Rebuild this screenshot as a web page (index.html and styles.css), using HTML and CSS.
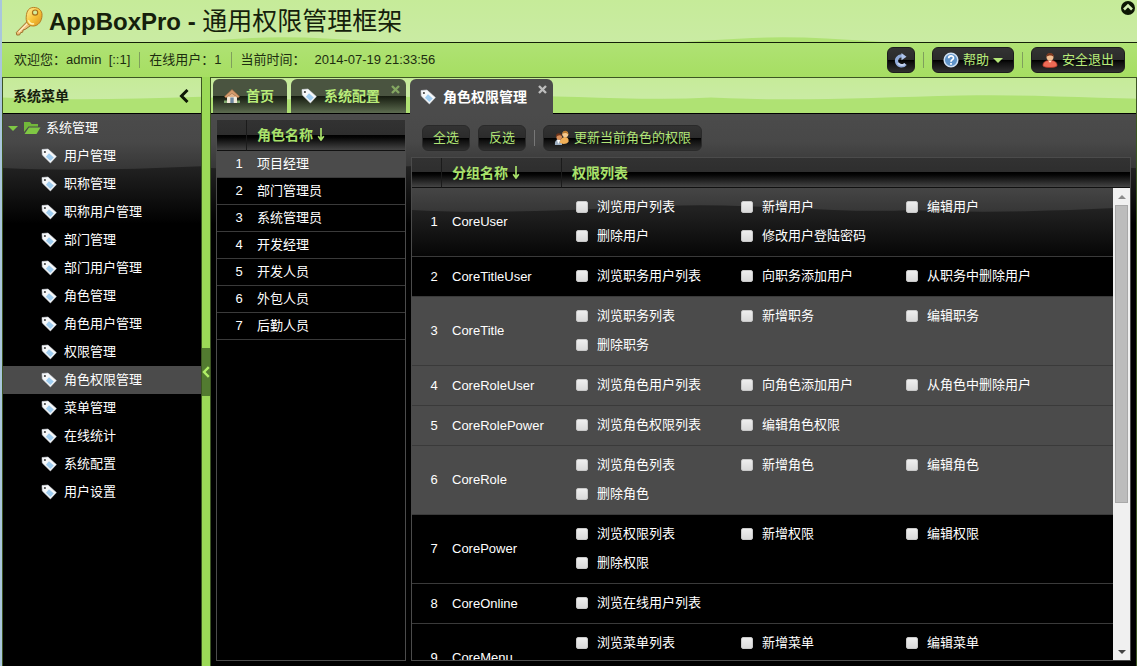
FILE: index.html
```
<!DOCTYPE html>
<html lang="zh-CN">
<head>
<meta charset="utf-8">
<title>AppBoxPro - 通用权限管理框架</title>
<link rel="stylesheet" href="styles.css">
</head>
<body>
<svg class="defs" aria-hidden="true">
  <defs>
    <linearGradient id="gold" x1="0" y1="0" x2="1" y2="1"><stop offset="0" stop-color="#fff0a0"/><stop offset=".5" stop-color="#f8c53a"/><stop offset="1" stop-color="#d98f1c"/></linearGradient>
    <symbol id="tag" viewBox="0 0 16 16"><path d="M1 1.500 7 1l8.400 7.600-6 6.400L1.300 7z" fill="#f6f8fa" stroke="#d3d9df" stroke-width=".6"/><path d="m8 5.200 4.800 4.200-3.400 3.600-4.500-4.200z" fill="#9fcdf0"/><circle cx="3.900" cy="4" r="1.100" fill="#444"/></symbol>
    <symbol id="house" viewBox="0 0 16 16"><path d="M0 12.500h16V15H0z" fill="#7fa86c"/><path d="M3 8h10v7H3z" fill="#f2ead9"/><path d="M0.500 8.500 8 1.500l7.500 7-1.500 1.300L8 5.500 2 9.800z" fill="#d49a6c" stroke="#a06a42" stroke-width=".6"/><path d="M6.300 9.500h3.400V15H6.300z" fill="#6f88a0"/><path d="M8 5.500 12.500 9h-9z" fill="#e5b48c"/></symbol>
    <symbol id="folder" viewBox="0 0 18 14"><path d="M1 1h6l1.500 2H15v2.500H5.500L1 11z" fill="#72b83a"/><path d="M6 6.500h11.500L13.500 13H1.500z" fill="#7fc744"/></symbol>
    <symbol id="key" viewBox="0 0 32 32"><path d="M14.500 16 2.500 28.200 3 31l3-.2 1-2.300 2.300-.6.300-2.300 2.200-.6L19 20z" fill="#f0c07a" stroke="#9a6a28"/><path d="M5 28 16 17" stroke="#fff0c8" stroke-width="1.300"/><path d="M17 2.500c5-2.500 12 0 12.800 5.500.7 5-1.800 12.500-8.300 13.300C16 22 12.500 18 13 12c.2-4 1-7.500 4-9.500z" fill="url(#gold)" stroke="#b4791f"/><circle cx="22.500" cy="7" r="2.800" fill="#d2ec9c" stroke="#a66e1a" stroke-width="1.200"/><path d="M15.500 15c.5 3 3 4.500 6 4" fill="none" stroke="#fff2b0" stroke-width="1.500"/></symbol>
    <symbol id="close" viewBox="0 0 9 9"><path d="m1 1 7 7M8 1 1 8" fill="none" stroke="currentColor" stroke-width="2.400"/></symbol>
    <symbol id="refresh" viewBox="0 0 16 16"><path d="M12.500 12A5 5 0 1 1 9 4" fill="none" stroke="#8fa9d8" stroke-width="3.200"/><path d="M12 12A4.800 4.800 0 0 1 5 11" fill="none" stroke="#c4d2ee" stroke-width="2"/><path d="m8.500 1 5 3.800-5 3.400z" fill="#b0c5ec"/></symbol>
    <symbol id="help" viewBox="0 0 16 16"><circle cx="8" cy="8" r="6.800" fill="#5f93c8" stroke="#cfe0f2" stroke-width="1.500"/><path d="M5.700 6.300c0-3.200 4.800-3.100 4.800-.4C10.500 7.800 8 7.500 8 9.800M8 11v1.800" fill="none" stroke="#fff" stroke-width="1.700"/></symbol>
    <symbol id="user" viewBox="0 0 16 16"><path d="M1 14c-.5-3.500 2-5.500 7-5.500s7.500 2 7 5.500c-2 2-12 2-14 0z" fill="#ee6a55" stroke="#ad3327" stroke-width=".7"/><path d="m6 8.500 2 2.300 2-2.300z" fill="#ffe3cc"/><circle cx="8" cy="5" r="3.500" fill="#f2bd91"/><path d="M4.300 5C3.800-.2 12.200-.2 11.700 5c-1.500-2-5.300-2-7.400 0z" fill="#7a371d"/></symbol>
    <symbol id="group" viewBox="0 0 17 17"><path d="M1 16c-.5-4 1-6 4-6s4 2 3.500 6z" fill="#9dafc2"/><path d="m3 10 1.500 5L7 10z" fill="#fff"/><circle cx="5.500" cy="7.500" r="3" fill="#d78d58"/><path d="M2 8c-1-6 6.500-6 7-1-2-2-5-2-7 1z" fill="#70351b"/><path d="M6 13c.5-2 2-5 5-5.500 3.500 0 5 2 4.500 5C13 15.500 8 15.500 6 13z" fill="#f2b058"/><circle cx="12" cy="4.500" r="3.200" fill="#f5c98f"/><path d="M9 4c0-4.500 6.500-4 6 .5-2-2-4-1.500-6-.5z" fill="#bd7b30"/></symbol>
    <symbol id="sort" viewBox="0 0 8 14"><path d="M4 0v12M1 9l3 4 3-4" fill="none" stroke="currentColor" stroke-width="1.800"/></symbol>
    <symbol id="chevron" viewBox="0 0 10 14"><path d="M8.500 1 2.500 7l6 6" fill="none" stroke="currentColor" stroke-width="3"/></symbol>
  </defs>
</svg>
<div class="page">
  <header class="banner wave-green">
    <svg class="key"><use href="#key"/></svg>
    <h1>AppBoxPro - <span class="cjk-title">通用权限管理框架</span></h1>
    <button class="collapse-top" aria-label="折叠"><svg viewBox="0 0 14 14"><circle cx="7" cy="7" r="7" fill="#0d1704"/><path d="m3 8.500 4-4 4 4" fill="none" stroke="#d5f0b4" stroke-width="2.600"/></svg></button>
  </header>
  <div class="statusbar">
    <span>欢迎您：admin&nbsp; [::1]</span><i class="sep"></i>
    <span>在线用户：1</span><i class="sep"></i>
    <span>当前时间：</span><time>2014-07-19 21:33:56</time>
    <div class="actions">
      <button class="btn icon-only" aria-label="刷新"><svg class="ico"><use href="#refresh"/></svg></button><i class="sep"></i>
      <button class="btn"><svg class="ico"><use href="#help"/></svg>帮助<i class="caret"></i></button><i class="sep"></i>
      <button class="btn"><svg class="ico"><use href="#user"/></svg>安全退出</button>
    </div>
  </div>
  <div class="workspace">
    <nav class="sidebar">
      <div class="side-head wave-green"><h2>系统菜单</h2><button class="fold" aria-label="收起"><svg><use href="#chevron"/></svg></button></div>
      <div class="tree wave-dark">
        <div class="root"><i class="caret"></i><svg class="folder"><use href="#folder"/></svg>系统管理</div>
        <a href="#"><svg class="ico"><use href="#tag"/></svg>用户管理</a>
        <a href="#"><svg class="ico"><use href="#tag"/></svg>职称管理</a>
        <a href="#"><svg class="ico"><use href="#tag"/></svg>职称用户管理</a>
        <a href="#"><svg class="ico"><use href="#tag"/></svg>部门管理</a>
        <a href="#"><svg class="ico"><use href="#tag"/></svg>部门用户管理</a>
        <a href="#"><svg class="ico"><use href="#tag"/></svg>角色管理</a>
        <a href="#"><svg class="ico"><use href="#tag"/></svg>角色用户管理</a>
        <a href="#"><svg class="ico"><use href="#tag"/></svg>权限管理</a>
        <a href="#" class="current"><svg class="ico"><use href="#tag"/></svg>角色权限管理</a>
        <a href="#"><svg class="ico"><use href="#tag"/></svg>菜单管理</a>
        <a href="#"><svg class="ico"><use href="#tag"/></svg>在线统计</a>
        <a href="#"><svg class="ico"><use href="#tag"/></svg>系统配置</a>
        <a href="#"><svg class="ico"><use href="#tag"/></svg>用户设置</a>
      </div>
    </nav>
    <div class="splitter"><button class="grip" aria-label="收起"><svg><use href="#chevron"/></svg></button></div>
    <main class="content">
      <div class="tabs wave-green">
        <button class="tab"><svg class="ico"><use href="#house"/></svg>首页</button>
        <button class="tab closable"><svg class="ico"><use href="#tag"/></svg>系统配置<svg class="x"><use href="#close"/></svg></button>
        <button class="tab closable active"><svg class="ico"><use href="#tag"/></svg>角色权限管理<svg class="x"><use href="#close"/></svg></button>
      </div>
      <div class="tab-body wave-dark">
        <section class="roles">
          <table>
            <colgroup><col class="c-num"><col></colgroup>
            <thead><tr><th></th><th>角色名称<svg class="sort"><use href="#sort"/></svg></th></tr></thead>
            <tbody>
              <tr class="current"><td>1</td><td>项目经理</td></tr>
              <tr><td>2</td><td>部门管理员</td></tr>
              <tr><td>3</td><td>系统管理员</td></tr>
              <tr><td>4</td><td>开发经理</td></tr>
              <tr><td>5</td><td>开发人员</td></tr>
              <tr><td>6</td><td>外包人员</td></tr>
              <tr><td>7</td><td>后勤人员</td></tr>
            </tbody>
          </table>
        </section>
        <section class="powers">
          <div class="toolbar">
            <button class="btn flat">全选</button><button class="btn flat">反选</button><i class="sep"></i>
            <button class="btn flat"><svg class="ico"><use href="#group"/></svg>更新当前角色的权限</button>
          </div>
          <div class="grid">
            <table class="grid-head">
              <colgroup><col class="c-num"><col class="c-name"><col></colgroup>
              <thead><tr><th></th><th>分组名称<svg class="sort"><use href="#sort"/></svg></th><th>权限列表</th></tr></thead>
            </table>
            <div class="grid-scroll">
              <div class="grid-rows">
                <table>
                  <colgroup><col class="c-num"><col class="c-name"><col></colgroup>
                  <tbody>
                    <tr class="glossy wave-dark"><td>1</td><td>CoreUser</td><td><div class="checks"><label><input type="checkbox">浏览用户列表</label><label><input type="checkbox">新增用户</label><label><input type="checkbox">编辑用户</label><label><input type="checkbox">删除用户</label><label><input type="checkbox">修改用户登陆密码</label></div></td></tr>
                    <tr><td>2</td><td>CoreTitleUser</td><td><div class="checks"><label><input type="checkbox">浏览职务用户列表</label><label><input type="checkbox">向职务添加用户</label><label><input type="checkbox">从职务中删除用户</label></div></td></tr>
                    <tr class="current"><td>3</td><td>CoreTitle</td><td><div class="checks"><label><input type="checkbox">浏览职务列表</label><label><input type="checkbox">新增职务</label><label><input type="checkbox">编辑职务</label><label><input type="checkbox">删除职务</label></div></td></tr>
                    <tr class="current"><td>4</td><td>CoreRoleUser</td><td><div class="checks"><label><input type="checkbox">浏览角色用户列表</label><label><input type="checkbox">向角色添加用户</label><label><input type="checkbox">从角色中删除用户</label></div></td></tr>
                    <tr class="current"><td>5</td><td>CoreRolePower</td><td><div class="checks"><label><input type="checkbox">浏览角色权限列表</label><label><input type="checkbox">编辑角色权限</label></div></td></tr>
                    <tr class="current"><td>6</td><td>CoreRole</td><td><div class="checks"><label><input type="checkbox">浏览角色列表</label><label><input type="checkbox">新增角色</label><label><input type="checkbox">编辑角色</label><label><input type="checkbox">删除角色</label></div></td></tr>
                    <tr><td>7</td><td>CorePower</td><td><div class="checks"><label><input type="checkbox">浏览权限列表</label><label><input type="checkbox">新增权限</label><label><input type="checkbox">编辑权限</label><label><input type="checkbox">删除权限</label></div></td></tr>
                    <tr><td>8</td><td>CoreOnline</td><td><div class="checks"><label><input type="checkbox">浏览在线用户列表</label></div></td></tr>
                    <tr><td>9</td><td>CoreMenu</td><td><div class="checks"><label><input type="checkbox">浏览菜单列表</label><label><input type="checkbox">新增菜单</label><label><input type="checkbox">编辑菜单</label><label><input type="checkbox">删除菜单</label></div></td></tr>
                  </tbody>
                </table>
              </div>
              <div class="scrollbar"><i class="arrow up"></i><div class="track"><div class="thumb"></div></div><i class="arrow down"></i></div>
            </div>
          </div>
        </section>
      </div>
    </main>
  </div>
</div>
</body>
</html>
```
FILE: styles.css
```
* { box-sizing: border-box; }

body {
  margin: 0;
  font: 13px/20px "Liberation Sans", "Noto Sans CJK SC", sans-serif;
  color: #fff;
  background: #000;
}

button { font: inherit; color: inherit; border: 0; padding: 0; background: none; cursor: pointer; }
a { color: inherit; text-decoration: none; }
svg { display: block; flex: none; }
.defs { position: absolute; width: 0; height: 0; }
.ico { width: 16px; height: 16px; }

.page {
  height: 100vh;
  display: flex;
  flex-direction: column;
  overflow: hidden;
  border-left: 2px solid #a9c6dc;
  background: #9fda58;
}

/* glossy wave textures */
.wave-green {
  background: #afe273 url("data:image/svg+xml,%3Csvg xmlns='http://www.w3.org/2000/svg' width='500' height='34' preserveAspectRatio='none' viewBox='0 0 500 34'%3E%3Cdefs%3E%3ClinearGradient id='g' x1='0' y1='0' x2='0' y2='1'%3E%3Cstop offset='0' stop-color='%23c6eb99'/%3E%3Cstop offset='1' stop-color='%23caeba4'/%3E%3C/linearGradient%3E%3C/defs%3E%3Cpath d='M0 0H500V19C420 23 340 15 250 17S80 23 0 19z' fill='url(%23g)'/%3E%3C/svg%3E") repeat-x 0 0 / 500px 100%;
}
.wave-dark {
  background: #000 url("data:image/svg+xml,%3Csvg xmlns='http://www.w3.org/2000/svg' width='500' height='110' viewBox='0 0 500 110'%3E%3Cdefs%3E%3ClinearGradient id='a' x1='0' y1='0' x2='0' y2='1'%3E%3Cstop offset='0' stop-color='%234b4b4b'/%3E%3Cstop offset='.5' stop-color='%23484848'/%3E%3Cstop offset='1' stop-color='%23363636'/%3E%3C/linearGradient%3E%3ClinearGradient id='b' x1='0' y1='0' x2='0' y2='1'%3E%3Cstop offset='.48' stop-color='%23222'/%3E%3Cstop offset='1' stop-color='%23000'/%3E%3C/linearGradient%3E%3C/defs%3E%3Cpath fill='url(%23b)' d='M0 0h500v110H0z'/%3E%3Cpath d='M0 0H500V54C420 58 340 46 250 50S80 58 0 54z' fill='url(%23a)'/%3E%3C/svg%3E") repeat-x;
}

.banner { flex: none; height: 43px; display: flex; align-items: center; padding: 0 2px 0 12px; border-bottom: 1px solid #142008; background-size: 500px 76px; }
.key { width: 30px; height: 32px; }
h1 { flex: 1; margin: 0 0 0 5px; font-size: 24px; line-height: 32px; font-weight: bold; color: #15200b; }
.cjk-title { font-size: 25px; font-weight: 400; }
.collapse-top { align-self: flex-start; margin-top: 1px; }
.collapse-top svg { width: 14px; height: 14px; }

.statusbar { flex: none; height: 34px; display: flex; align-items: center; padding: 0 12px; gap: 9px; color: #1d2d10; background: linear-gradient(#afe274, #a6de62); }
.actions { margin-left: auto; display: flex; align-items: center; gap: 8px; }
.sep { width: 1px; height: 16px; background: #7f9f5c; }

.btn {
  height: 26px;
  display: flex;
  align-items: center;
  gap: 4px;
  padding: 0 10px;
  border: 1px solid #1c1c1c;
  border-radius: 6px;
  color: #b8ec79;
  background: linear-gradient(#333 0, #2b2b2b 50%, #000 51%, #101010 62%, #303030 100%);
}
.btn.icon-only { padding: 0 5px; }
.btn.flat { border-color: #2a2a2a; color: #b0e476; }
.caret { width: 0; height: 0; border: 5px solid transparent; border-top-color: #b4e778; border-bottom-width: 0; }

.workspace { flex: 1; min-height: 0; display: flex; }

.sidebar { flex: none; width: 200px; display: flex; flex-direction: column; border: 1px solid #3c5522; border-width: 1px 1px 0; }
.side-head { height: 36px; display: flex; align-items: center; justify-content: space-between; padding: 0 12px 0 10px; border-bottom: 1px solid #000; }
h2 { margin: 0; font-size: 14px; color: #16200c; }
.fold svg { width: 10px; height: 14px; color: #0d1704; }
.tree { flex: 1; line-height: 28px; }
.root, .tree a { height: 28px; display: flex; align-items: center; }
.root { padding-left: 5px; gap: 5px; }
.root .caret { border-top-color: #7fc744; }
.folder { width: 18px; height: 14px; }
.tree a { padding-left: 38px; gap: 7px; }
.tree .current, tr.current { background: #4b4b4b; }

.splitter { flex: none; width: 8px; display: flex; align-items: center; background: #9bd957; }
.grip { width: 8px; height: 48px; background: #527b30; color: #b0ee66; }
.grip svg { width: 8px; height: 12px; }

.content { flex: 1; min-width: 0; display: flex; flex-direction: column; border: 1px solid #3c5522; border-bottom: 0; }
.tabs { flex: none; height: 36px; display: flex; align-items: flex-end; gap: 4px; padding-left: 2px; border-bottom: 1px solid #000; }
.tab {
  position: relative;
  height: 34px;
  display: flex;
  align-items: center;
  gap: 6px;
  padding: 0 13px 0 11px;
  border-radius: 6px 6px 0 0;
  font-size: 14px;
  font-weight: bold;
  color: #b8ec79;
  background: linear-gradient(#4a5440 0, #4a5440 50%, #161c10 51%, #5d6c50 100%);
}
.closable { padding: 0 26px 0 10px; }
.closable .ico { margin-right: 1px; }
.tab.active { height: 35px; margin-bottom: -1px; color: #fff; background: #4b4b4b; }
.x { position: absolute; top: 6px; right: 6px; width: 9px; height: 9px; color: #84a661; }
.active .x { color: #bdbdbd; }

.tab-body { flex: 1; min-height: 0; display: flex; gap: 5px; padding: 5px; }
.roles { flex: none; width: 190px; border: 1px solid #4b4b4b; background: #000; }
.powers { flex: 1; min-width: 0; display: flex; flex-direction: column; }
.toolbar { flex: none; height: 38px; display: flex; align-items: center; gap: 8px; padding-left: 11px; }
.toolbar .sep { background: #777; }
.grid { flex: 1; min-height: 0; display: flex; flex-direction: column; border: 1px solid #4b4b4b; background: #000; }

table { width: 100%; table-layout: fixed; border-collapse: separate; border-spacing: 0; }
.c-num { width: 30px; }
.c-name { width: 120px; }
th {
  height: 30px;
  padding: 0 10px;
  text-align: left;
  font-size: 14px;
  color: #a9e26b;
  border-right: 1px solid #1b1b1b;
  border-bottom: 1px solid #111;
  background: linear-gradient(#323232 0, #2e2e2e 49%, #000 50%, #050505 58%, #454545 100%);
}
.roles th { height: 31px; }
th:last-child { border-right: 0; }
.sort { display: inline-block; width: 8px; height: 13px; margin-left: 4px; vertical-align: -1px; }
td { height: 27px; padding: 0 10px; border-bottom: 1px solid #3a3a3a; }
td:first-child { padding: 0 0 0 14px; text-align: center; }

.grid-scroll { flex: 1; min-height: 0; display: flex; }
.grid-rows { flex: 1; overflow: hidden; }
.glossy { background-position: 0 -32px; }
.grid-rows td:last-child { padding: 4px 0 6px 14px; }
.checks { display: grid; grid-template-columns: repeat(3, 165px); grid-auto-rows: 29px; }
.checks label { display: flex; align-items: center; gap: 9px; }
input[type="checkbox"] { appearance: none; width: 12px; height: 12px; margin: 0; border-radius: 2px; border: 1px solid #c8c8c8; background: linear-gradient(#eee, #dadada); }

.scrollbar { flex: none; width: 17px; display: flex; flex-direction: column; background: #f0f0f0; }
.arrow { margin: 7px auto 6px; width: 0; height: 0; border: 4px solid transparent; }
.arrow.up { border-top-width: 0; border-bottom-color: #8b8b8b; }
.arrow.down { border-bottom-width: 0; border-top-color: #444; }
.track { flex: 1; padding: 0 2px; }
.thumb { height: 68%; background: #bcbcbc; border: 1px solid #a8a8a8; }
```
